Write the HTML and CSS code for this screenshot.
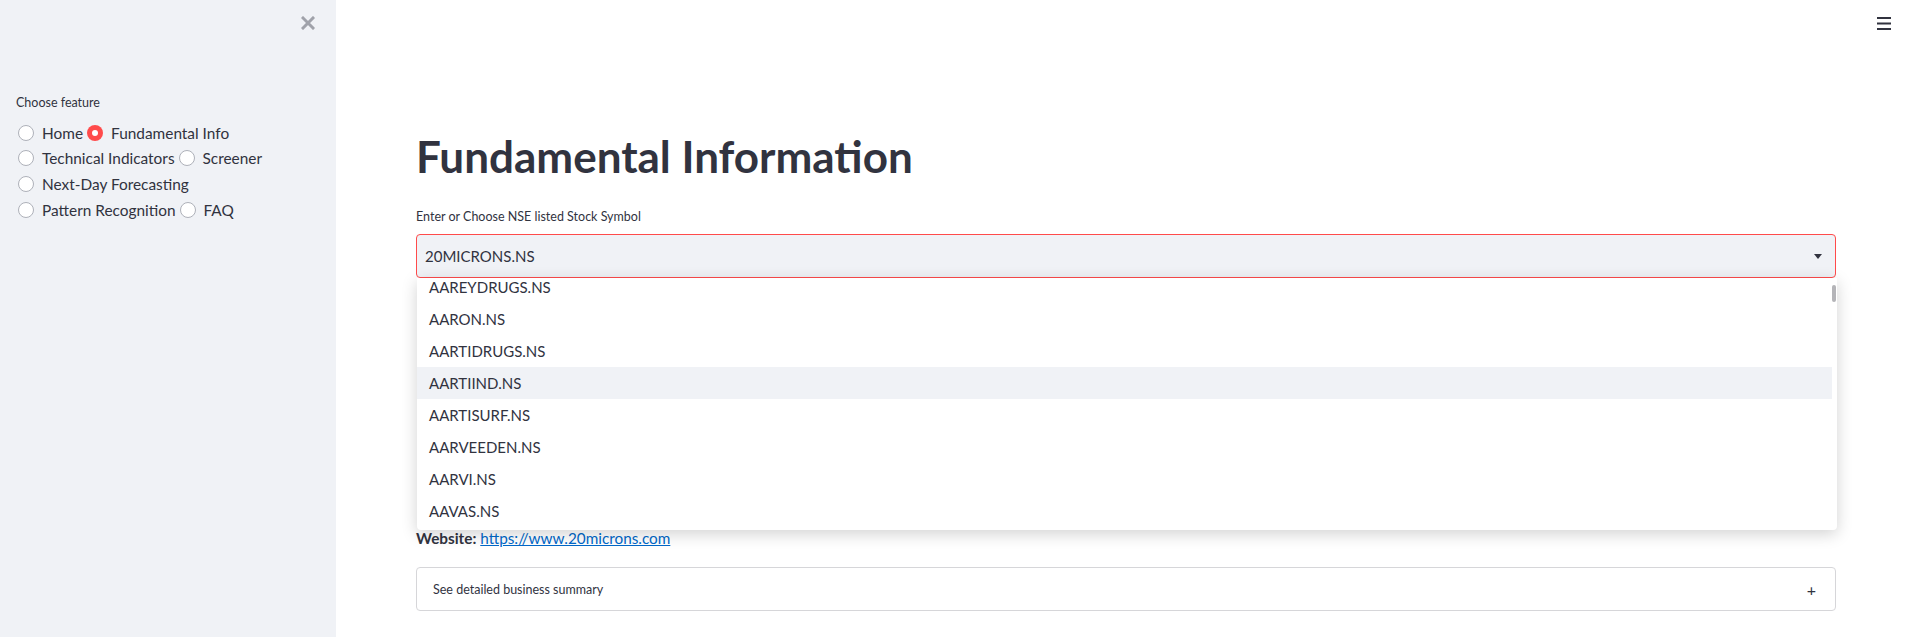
FILE: index.html
```html
<!DOCTYPE html>
<html>
<head>
<meta charset="utf-8">
<link rel="stylesheet" href="styles.css">
</head>
<body>
<div class="app">
  <aside class="sidebar">
    <div class="sb-head">
      <svg class="close" width="14" height="14" viewBox="0 0 14 14"><path d="M2 2L12 12M12 2L2 12" stroke="#a0a2aa" stroke-width="3" stroke-linecap="square"/></svg>
    </div>
    <div class="sb-label">Choose feature</div>
    <div class="radios">
      <div class="rrow">
        <div class="ritem"><span class="dot"></span><span class="rtext">Home</span></div>
        <div class="ritem"><span class="dot on"></span><span class="rtext">Fundamental Info</span></div>
      </div>
      <div class="rrow">
        <div class="ritem"><span class="dot"></span><span class="rtext">Technical Indicators</span></div>
        <div class="ritem"><span class="dot"></span><span class="rtext">Screener</span></div>
      </div>
      <div class="rrow">
        <div class="ritem"><span class="dot"></span><span class="rtext">Next-Day Forecasting</span></div>
      </div>
      <div class="rrow">
        <div class="ritem"><span class="dot"></span><span class="rtext">Pattern Recognition</span></div>
        <div class="ritem"><span class="dot"></span><span class="rtext">FAQ</span></div>
      </div>
    </div>
  </aside>
  <main class="main">
    <div class="topbar">
      <svg width="14" height="14" viewBox="0 0 14 14"><rect x="0" y="1" width="14" height="2" fill="#31333f"/><rect x="0" y="6.5" width="14" height="2" fill="#31333f"/><rect x="0" y="12" width="14" height="2" fill="#31333f"/></svg>
    </div>
    <div class="content">
      <h1 class="title">Fundamental Information</h1>
      <div class="wlabel">Enter or Choose NSE listed Stock Symbol</div>
      <div class="selwrap">
        <div class="select">
          <span class="selval">20MICRONS.NS</span>
          <svg class="caret" width="8" height="5" viewBox="0 0 8 5"><path d="M0 0H8L4 5Z" fill="#31333f"/></svg>
        </div>
        <div class="menu">
          <ul class="opts">
            <li>AAREYDRUGS.NS</li>
            <li>AARON.NS</li>
            <li>AARTIDRUGS.NS</li>
            <li class="hl">AARTIIND.NS</li>
            <li>AARTISURF.NS</li>
            <li>AARVEEDEN.NS</li>
            <li>AARVI.NS</li>
            <li>AAVAS.NS</li>
          </ul>
          <div class="thumb"></div>
        </div>
      </div>
      <p class="website"><b>Website:</b> <a href="#">https://www.20microns.com</a></p>
      <div class="expander">
        <span>See detailed business summary</span>
        <span class="plus">+</span>
      </div>
    </div>
  </main>
</div>
</body>
</html>
```
FILE: styles.css
```css
html, body {
  margin: 0;
  padding: 0;
  background: #ffffff;
}
body {
  font-family: Lato, "Noto Sans", sans-serif;
  color: #31333f;
}
.app {
  display: flex;
  height: 637px;
  overflow: hidden;
}
.sidebar {
  width: 336px;
  flex: none;
  background: #f0f2f6;
  padding: 0 16px;
  box-sizing: border-box;
}
.sb-head {
  height: 46px;
  display: flex;
  justify-content: flex-end;
  align-items: center;
  padding-right: 5px;
}
.sb-label {
  margin-top: 49px;
  font-size: 12.5px;
  line-height: 16px;
}
.radios {
  margin-top: 9px;
}
.rrow {
  display: flex;
  height: 25.6px;
  align-items: center;
}
.ritem {
  display: flex;
  align-items: center;
  padding-left: 2px;
  padding-right: 2px;
}
.dot {
  width: 16px;
  height: 16px;
  box-sizing: border-box;
  border-radius: 50%;
  border: 1.5px solid #aeb1b9;
  background: #ffffff;
  margin-right: 8px;
  display: flex;
  align-items: center;
  justify-content: center;
}
.dot.on {
  border: none;
  background: #ff4b4b;
}
.dot.on::after {
  content: "";
  width: 6px;
  height: 6px;
  border-radius: 50%;
  background: #ffffff;
}
.rtext {
  font-size: 15.4px;
  line-height: 20px;
}
.main {
  flex: 1;
  display: flex;
  flex-direction: column;
}
.topbar {
  height: 46px;
  display: flex;
  justify-content: flex-end;
  align-items: center;
  padding-right: 29px;
}
.content {
  padding-left: 80px;
  width: 1420px;
}
.title {
  margin: 84px 0 0 0;
  font-size: 44px;
  line-height: 52.8px;
  font-weight: 700;
}
.wlabel {
  margin-top: 26.6px;
  font-size: 12.5px;
  line-height: 16px;
}
.selwrap {
  position: relative;
  margin-top: 9px;
}
.select {
  height: 44px;
  box-sizing: border-box;
  border: 1px solid #ff4b4b;
  border-radius: 4px;
  background: #f0f2f6;
  display: flex;
  align-items: center;
  justify-content: space-between;
  padding: 0 13px 0 8px;
}
.selval {
  font-size: 15px;
}
.menu {
  position: absolute;
  top: 44px;
  left: 1px;
  right: -1px;
  height: 252px;
  background: #ffffff;
  overflow: hidden;
  border-radius: 0 0 4px 4px;
  box-shadow: 0 4px 16px rgba(0, 0, 0, 0.18);
  z-index: 2;
}
.opts {
  list-style: none;
  margin: -7px 5px 0 0;
  padding: 0;
}
.opts li {
  height: 32px;
  line-height: 32px;
  padding-left: 12px;
  font-size: 15px;
}
.opts li.hl {
  background: #f0f2f6;
}
.thumb {
  position: absolute;
  top: 7px;
  right: 1px;
  width: 4px;
  height: 17px;
  border-radius: 2px;
  background: #b4b4b8;
}
.website {
  margin: 252px 0 0 0;
  font-size: 15.3px;
  line-height: 16px;
}
.website a {
  color: #0068c9;
}
.expander {
  margin-top: 21px;
  height: 44px;
  box-sizing: border-box;
  border: 1px solid #d6d6d9;
  border-radius: 4px;
  display: flex;
  align-items: center;
  justify-content: space-between;
  padding: 0 19px 0 16px;
  font-size: 12.5px;
}
.plus {
  font-size: 16px;
}
```
